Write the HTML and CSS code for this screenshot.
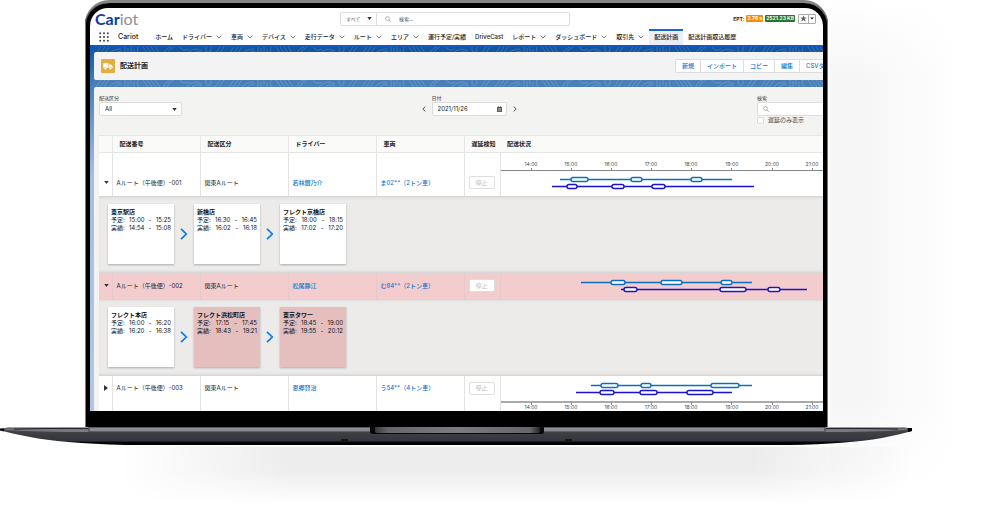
FILE: index.html
```html
<!DOCTYPE html>
<html lang="ja">
<head>
<meta charset="utf-8">
<title>配送計画 | Cariot</title>
<link rel="stylesheet" href="styles.css">
</head>
<body>
<svg class="defs" width="0" height="0" aria-hidden="true">
  <symbol id="down" viewBox="0 0 6 4"><path d="M.6.6 3 3 5.4.6" fill="none" stroke="#555" stroke-width=".8"/></symbol>
  <symbol id="caret" viewBox="0 0 6 4"><path d="M0 0h6L3 4z" fill="#333"/></symbol>
  <symbol id="glass" viewBox="0 0 6 6"><circle cx="2.5" cy="2.5" r="1.9" fill="none" stroke="#888" stroke-width=".6"/><path d="M4 4 5.8 5.8" stroke="#888" stroke-width=".7"/></symbol>
  <symbol id="next" viewBox="0 0 8 12"><path d="M1 .8 6.3 6 1 11.2" fill="none" stroke="#0a7cf0" stroke-width="1.7"/></symbol>
  <pattern id="topo" width="133" height="7" patternUnits="userSpaceOnUse">
    <g fill="none" stroke="#fff" stroke-opacity=".22" stroke-width=".7">
      <path d="M2 7 7 0M6 7 11 0M10 7 15 0M15 7q4-5 12-5M20 7q3-3 8-3M31 0v7M34 1v6M37 0v5M40 2v5M44 0q-2 4 1 7M49 0l5 7M53 0l5 7M57 0l5 7M61 0l5 7M70 7q1-5 7-7M73 7q1-4 7-7M86 0q3 5 9 2M92 7q8-8 16-3M98 7q5-4 10-1M112 0v4q2 3 5 0V0M121 7l5-7M125 7l5-7"/>
    </g>
  </pattern>
</svg>
<main class="stage">
  <div class="lid">
    <div class="screen">
      <header class="topbar">
        <a class="logo" href="#"><b>Car</b>iot</a>
        <form class="global-search">
          <span class="scope">
            <select aria-label="検索対象"><option>すべて</option></select>
            <svg class="caret"><use href="#caret"/></svg>
          </span>
          <svg class="glass"><use href="#glass"/></svg>
          <input type="search" aria-label="検索" placeholder="検索...">
        </form>
        <div class="status">
          <span>EPT:</span><span class="badge orange">2.78 s</span><span class="badge green">2521.23 KB</span>
          <span class="favorites">
            <button type="button" aria-label="お気に入り"><svg width="7" height="7" viewBox="0 0 8 8"><path d="m4 .4 1 2.5 2.700.1-2.100 1.700.8 2.700L4 5.900 1.600 7.400l.8-2.700L.3 3 3 2.900z" fill="#666"/></svg></button>
            <button type="button" aria-label="お気に入り一覧"><svg width="4" height="3" viewBox="0 0 6 4"><use href="#caret"/></svg></button>
          </span>
        </div>
      </header>
      <nav class="nav">
        <button class="launcher" type="button" aria-label="アプリ"><svg width="10" height="10" viewBox="0 0 10 10" fill="#444"><circle cx="1.200" cy="1.200" r="1"/><circle cx="5" cy="1.200" r="1"/><circle cx="8.800" cy="1.200" r="1"/><circle cx="1.200" cy="5" r="1"/><circle cx="5" cy="5" r="1"/><circle cx="8.800" cy="5" r="1"/><circle cx="1.200" cy="8.800" r="1"/><circle cx="5" cy="8.800" r="1"/><circle cx="8.800" cy="8.800" r="1"/></svg></button>
        <span class="app">Cariot</span>
        <a href="#">ホーム</a>
        <a href="#">ドライバー<svg class="down"><use href="#down"/></svg></a>
        <a href="#">車両<svg class="down"><use href="#down"/></svg></a>
        <a href="#">デバイス<svg class="down"><use href="#down"/></svg></a>
        <a href="#">走行データ<svg class="down"><use href="#down"/></svg></a>
        <a href="#">ルート<svg class="down"><use href="#down"/></svg></a>
        <a href="#">エリア<svg class="down"><use href="#down"/></svg></a>
        <a href="#">運行予定/実績</a>
        <a href="#">DriveCast</a>
        <a href="#">レポート<svg class="down"><use href="#down"/></svg></a>
        <a href="#">ダッシュボード<svg class="down"><use href="#down"/></svg></a>
        <a href="#">取引先<svg class="down"><use href="#down"/></svg></a>
        <a class="current" href="#">配送計画</a>
        <a href="#">配送計画取込履歴</a>
      </nav>
      <div class="body">
        <svg class="band dark" aria-hidden="true"><rect width="100%" height="7" fill="url(#topo)"/></svg>
        <section class="title">
          <svg class="truck" viewBox="0 0 14 14"><rect width="14" height="14" rx="1" fill="#e0b040"/><path d="M2.300 4.200h5.200v4.800H2.300zM8.100 5.600h2l1.500 1.700V9H8.100z" fill="#fff"/><circle cx="4.300" cy="9.300" r="1.200" fill="#fff" stroke="#e0b040" stroke-width=".5"/><circle cx="9.500" cy="9.300" r="1.200" fill="#fff" stroke="#e0b040" stroke-width=".5"/></svg>
          <h1>配送計画</h1>
          <div class="actions">
            <button type="button">新規</button><button type="button">インポート</button><button type="button">コピー</button><button type="button">編集</button><button type="button">CSVダウンロード</button>
          </div>
        </section>
        <svg class="band" aria-hidden="true"><rect width="100%" height="7" fill="url(#topo)"/></svg>
        <section class="panel">
          <form class="filters">
            <div class="field kind">
              <label for="kind">配送区分</label>
              <span class="control"><select id="kind"><option>All</option></select><svg class="caret"><use href="#caret"/></svg></span>
            </div>
            <div class="field date">
              <label for="date">日付</label>
              <span class="stepper">
                <button type="button" aria-label="前日"><svg width="4" height="6" viewBox="0 0 4 6"><path d="M3.400.5.800 3l2.600 2.500" fill="none" stroke="#444" stroke-width=".9"/></svg></button>
                <span class="control"><input id="date" type="text" value="2021/11/26"><svg width="5" height="6" viewBox="0 0 5 6"><path d="M0 1h1V0h.7v1h1.600V0H4v1h1v5H0z" fill="#555"/><path d="M.6 2.400h3.800M1 3.600h3M1 4.800h3" stroke="#fff" stroke-width=".4"/></svg></span>
                <button type="button" aria-label="翌日"><svg width="4" height="6" viewBox="0 0 4 6"><path d="M.6.5 3.200 3 .6 5.500" fill="none" stroke="#444" stroke-width=".9"/></svg></button>
              </span>
            </div>
            <div class="field find">
              <label for="find">検索</label>
              <span class="control"><svg class="glass"><use href="#glass"/></svg><input id="find" type="search"></span>
              <label class="check"><input type="checkbox">遅延のみ表示</label>
            </div>
          </form>
          <table class="plans">
            <colgroup><col class="c-toggle"><col class="c-text"><col class="c-text"><col class="c-text"><col class="c-text"><col class="c-stop"><col></colgroup>
            <thead>
              <tr><th></th><th>配送番号</th><th>配送区分</th><th>ドライバー</th><th>車両</th><th>遅延検知</th><th>配送状況</th></tr>
            </thead>
            <tbody>
              <tr class="plan first">
                <td><button class="toggle" type="button" aria-label="閉じる"><svg class="caret"><use href="#caret"/></svg></button></td>
                <td>Aルート（午後便）-001</td><td>関東Aルート</td><td><a href="#">若林銀乃介</a></td><td><a href="#">ま02**（2トン車）</a></td>
                <td><button class="stop" type="button" disabled>停止</button></td>
                <td class="chart"><svg width="322" height="42" viewBox="0 0 322 42">
                  <path class="axis" d="M0 17.500h322M30.500 15v2M70.500 15v2M110.500 15v2M150.500 15v2M190.500 15v2M230.500 15v2M271.500 15v2M311.500 15v2"/>
                  <g class="hours"><text x="30" y="13">14:00</text><text x="70" y="13">15:00</text><text x="110" y="13">16:00</text><text x="150" y="13">17:00</text><text x="190" y="13">18:00</text><text x="231" y="13">19:00</text><text x="271" y="13">20:00</text><text x="311" y="13">21:00</text></g>
                  <g class="due"><path d="M59 26.500h172"/><rect x="70" y="24.500" width="17" height="4" rx="2"/><rect x="130" y="24.500" width="11" height="4" rx="2"/><rect x="190" y="24.500" width="11" height="4" rx="2"/></g>
                  <g class="done"><path d="M51 33.500h202"/><rect x="66" y="31.500" width="10" height="4" rx="2"/><rect x="111" y="31.500" width="12" height="4" rx="2"/><rect x="151" y="31.500" width="13" height="4" rx="2"/></g>
                </svg></td>
              </tr>
              <tr class="detail"><td colspan="7"><div class="stops">
                <article><h2>東京駅店</h2><p><span>予定:</span><span>15:00</span><span>-</span><span>15:25</span></p><p><span>実績:</span><span>14:54</span><span>-</span><span>15:08</span></p></article>
                <svg class="next"><use href="#next"/></svg>
                <article><h2>新橋店</h2><p><span>予定:</span><span>16:30</span><span>-</span><span>16:45</span></p><p><span>実績:</span><span>16:02</span><span>-</span><span>16:18</span></p></article>
                <svg class="next"><use href="#next"/></svg>
                <article><h2>フレクト京橋店</h2><p><span>予定:</span><span>18:00</span><span>-</span><span>18:15</span></p><p><span>実績:</span><span>17:02</span><span>-</span><span>17:20</span></p></article>
              </div></td></tr>
              <tr class="plan late">
                <td><button class="toggle" type="button" aria-label="閉じる"><svg class="caret"><use href="#caret"/></svg></button></td>
                <td>Aルート（午後便）-002</td><td>関東Aルート</td><td><a href="#">松尾静江</a></td><td><a href="#">む84**（2トン車）</a></td>
                <td><button class="stop" type="button" disabled>停止</button></td>
                <td class="chart"><svg width="322" height="26" viewBox="0 0 322 26">
                  <g class="due"><path d="M80 9.500h171"/><rect x="110" y="7.500" width="14" height="4" rx="2"/><rect x="160" y="7.500" width="21" height="4" rx="2"/><rect x="220" y="7.500" width="11" height="4" rx="2"/></g>
                  <g class="done"><path d="M120 16.500h186"/><rect x="123" y="14.500" width="13" height="4" rx="2"/><rect x="219" y="14.500" width="26" height="4" rx="2"/><rect x="267" y="14.500" width="12" height="4" rx="2"/></g>
                </svg></td>
              </tr>
              <tr class="detail"><td colspan="7"><div class="stops">
                <article><h2>フレクト本店</h2><p><span>予定:</span><span>16:00</span><span>-</span><span>16:20</span></p><p><span>実績:</span><span>16:20</span><span>-</span><span>16:38</span></p></article>
                <svg class="next"><use href="#next"/></svg>
                <article class="delayed"><h2>フレクト浜松町店</h2><p><span>予定:</span><span>17:15</span><span>-</span><span>17:45</span></p><p><span>実績:</span><span>18:43</span><span>-</span><span>19:21</span></p></article>
                <svg class="next"><use href="#next"/></svg>
                <article class="delayed"><h2>東京タワー</h2><p><span>予定:</span><span>18:45</span><span>-</span><span>19:00</span></p><p><span>実績:</span><span>19:55</span><span>-</span><span>20:12</span></p></article>
              </div></td></tr>
              <tr class="plan last">
                <td><button class="toggle" type="button" aria-label="開く"><svg width="4" height="6"><path d="M0 0v6l4-3z" fill="#333"/></svg></button></td>
                <td>Aルート（午後便）-003</td><td>関東Aルート</td><td><a href="#">恩郷賢治</a></td><td><a href="#">う54**（4トン車）</a></td>
                <td><button class="stop" type="button" disabled>停止</button></td>
                <td class="chart"><svg width="322" height="34" viewBox="0 0 322 34">
                  <path class="axis thick" d="M0 26h322"/><path class="axis" d="M30.500 26v3M70.500 26v3M110.500 26v3M150.500 26v3M190.500 26v3M230.500 26v3M271.500 26v3M311.500 26v3"/>
                  <g class="hours"><text x="30" y="33">14:00</text><text x="70" y="33">15:00</text><text x="110" y="33">16:00</text><text x="150" y="33">17:00</text><text x="190" y="33">18:00</text><text x="231" y="33">19:00</text><text x="271" y="33">20:00</text><text x="311" y="33">21:00</text></g>
                  <g class="due"><path d="M90 9.500h161"/><rect x="100" y="7.500" width="17" height="4" rx="2"/><rect x="140" y="7.500" width="10" height="4" rx="2"/><rect x="210" y="7.500" width="28" height="4" rx="2"/></g>
                  <g class="done"><path d="M75 16.500h156"/><rect x="99" y="14.500" width="14" height="4" rx="2"/><rect x="139" y="14.500" width="17" height="4" rx="2"/><rect x="186" y="14.500" width="26" height="4" rx="2"/></g>
                </svg></td>
              </tr>
            </tbody>
          </table>
        </section>
      </div>
    </div>
  </div>
  <svg class="base" viewBox="0 0 912 18" preserveAspectRatio="none" aria-hidden="true">
    <defs>
      <linearGradient id="metal" x2="0" y2="1"><stop offset="0" stop-color="#4a4b50"/><stop offset=".4" stop-color="#3c3d43"/><stop offset=".76" stop-color="#34353c"/><stop offset=".85" stop-color="#050506"/><stop offset="1" stop-color="#000"/></linearGradient>
      <linearGradient id="notch"><stop offset="0" stop-color="#39393d"/><stop offset=".08" stop-color="#66666a"/><stop offset=".5" stop-color="#7b7b80"/><stop offset=".94" stop-color="#66666a"/><stop offset="1" stop-color="#242428"/></linearGradient>
    </defs>
    <path d="M0 2 8 .5h896l8 1V4q-10 3-30 7-35 6-92 7H125Q60 16 30 10 8 6 0 3z" fill="url(#metal)"/>
    <path d="M5 1.500 90 1v4Q40 5 5 3zM907 1.500 823 1v4q45 0 84-2z" fill="#77797e"/>
    <path d="M14 2.200q30-1 76-.7M898 2.200q-30-1-72-.7" fill="none" stroke="#232429" stroke-width="1"/>
    <path d="M88 0h738v5H88z" fill="#5b5d62"/>
    <path d="M90 1h734v3H90z" fill="#888b90"/>
    <path d="M370 0h174v5q0 2-4 2H374q-4 0-4-2z" fill="#08080a"/>
    <path d="M375 0h165v4q0 2-3 2H378q-3 0-3-2z" fill="url(#notch)"/>
    <path d="M0 1.500h4v3L0 3.500zM908 1h4v3l-4 1z" fill="#000"/>
    <path d="M341 13h7M565 13h7" stroke="#141418" stroke-width="2"/>
  </svg>
  <div class="floor"></div>
</main>
</body>
</html>
```
FILE: styles.css
```css
* { box-sizing: border-box; }
body { margin: 0; background: #fff; color: #222; font: 6px/8px Inter, "Noto Sans CJK JP", sans-serif; }
a { color: inherit; text-decoration: none; }
button, input, select { margin: 0; padding: 0; border: 0; background: none; color: inherit; font: inherit; }
select, input[type="search"] { appearance: none; }
input, select { outline: 0; min-width: 0; }
svg { display: block; flex: none; }
.defs { position: absolute; }
h1, h2, p { margin: 0; }

.stage {
  min-height: 100vh;
  padding-right: 88px;
  overflow: hidden;
  background:
    linear-gradient(#fff, transparent) right 0 top 0 / 170px 80px no-repeat,
    linear-gradient(transparent, #fff) right 0 top 400px / 170px 90px no-repeat,
    linear-gradient(to right, #f6f6f6 20%, #fff 75%) right 0 top 0 / 170px 490px no-repeat;
}
.lid {
  margin: 0 84px 0 85px;
  padding: 5px 5px 16px;
  border-top: 3px solid #858585;
  border-radius: 24px 24px 0 0;
  background: #000;
  box-shadow: inset 1px 0 #777, inset -1px 0 #777;
}
.screen { overflow: hidden; border-radius: 18px 18px 0 0; background: #fff; }
.caret { width: 5px; height: 3px; }
.glass { width: 6px; height: 6px; }

.topbar { display: grid; grid-template-columns: 250px 230px 1fr; align-items: center; height: 21px; }
.logo { padding-left: 5px; color: #8c9095; font: 16px/20px Lato, sans-serif; }
.logo b { color: #0b3aa5; font-weight: 700; }
.global-search { display: flex; align-items: center; height: 14px; border: 1px solid #ddd; border-radius: 2px; font-size: 5px; }
.scope { display: flex; align-items: center; width: 36px; height: 100%; margin-right: 8px; padding: 0 4px 0 5px; border-right: 1px solid #ddd; }
.scope select { flex: 1; color: #555; }
.global-search input { flex: 1; margin-left: 8px; }
.global-search input::placeholder { color: #555; }
.status { display: flex; justify-content: flex-end; align-items: center; gap: 2px; padding-right: 7px; font-size: 5px; font-weight: 700; }
.badge { padding: 0 1px; border-radius: 1px; color: #fff; line-height: 7px; }
.orange { background: #f78b0c; }
.green { background: #24772b; }
.favorites { display: flex; margin-left: 1px; border: 1px solid #aaa; border-radius: 1px; }
.favorites button { display: grid; place-items: center; height: 8px; padding: 0 1px; }
.favorites button + button { border-left: 1px solid #aaa; }

.nav { display: flex; align-items: stretch; gap: 9px; height: 16px; padding-left: 9px; white-space: nowrap; }
.nav a { display: flex; align-items: center; gap: 4px; font-weight: 500; }
.down { width: 6px; height: 4px; }
.launcher { display: grid; place-items: center; }
.app { align-self: center; margin-right: 8px; font-size: 7px; font-weight: 500; }
.nav .current { margin: 0 -4px; padding: 0 5px; background: #e9eef9; box-shadow: inset 0 2px #1b65c9; }

.body { padding-left: 4px; background: linear-gradient(#0b55ad, #4a80b9 42px, #a9bddd 130px, #b3c5e3); }
.band { width: 100%; height: 7px; background: #4a80b8; }
.band.dark { background: #14569f; border-top: 2px solid #1259c3; }
.title { display: flex; align-items: center; height: 28px; padding-left: 7px; border-radius: 2px 0 0 2px; background: #f3f3f3; }
.truck { width: 14px; height: 14px; }
.title h1 { margin-left: 5px; font-size: 7px; line-height: 10px; }
.actions { display: flex; width: 148px; height: 14px; margin-left: auto; overflow: hidden; border: 1px solid #ddd; border-right: 0; border-radius: 2px 0 0 2px; background: #fff; }
.actions button { flex: none; padding: 0 6px; color: #0f76d2; font-weight: 500; }
.actions button + button { border-left: 1px solid #ddd; }

.panel { padding-left: 5px; border-radius: 2px 0 0; background: #f3f3f2; }
.filters { display: grid; grid-template-columns: 1fr auto 1fr; align-items: start; height: 48px; padding-top: 7px; }
.field { color: #444; }
.field > label { display: block; font-size: 5px; }
.control { display: flex; align-items: center; height: 14px; border: 1px solid #ddd; border-radius: 2px; background: #fff; color: #222; }
.kind .control { width: 83px; padding: 0 4px 0 5px; }
.kind select { flex: 1; }
.date { padding-left: 16px; }
.date > label { padding-left: 10px; }
.stepper { display: flex; align-items: center; gap: 6px; }
.date .control { width: 75px; padding: 0 4px 0 5px; }
.date input { flex: 1; }
.find { width: 66px; justify-self: end; }
.find .control { padding-left: 5px; border-right: 0; border-radius: 2px 0 0 2px; }
.field > .check { display: flex; align-items: center; gap: 4px; font-size: 6px; }
.check input { appearance: none; width: 7px; height: 7px; border: 1px solid #ddd; border-radius: 1px; background: #fff; }

.plans { width: 100%; table-layout: fixed; border-collapse: collapse; background: #fff; white-space: nowrap; }
.c-toggle { width: 13px; }
.c-text { width: 88px; }
.c-stop { width: 36px; }
.plans th { height: 17px; padding: 0 7px; border: solid #e6e6e4; border-width: 1px 0 1px 1px; background: #fafaf9; font-weight: 600; text-align: left; }
.plans th:first-child { border-left: 0; }
.plans th:last-child { border-left: 0; }
.plans td { padding: 0 4px; border-left: 1px solid #e3e3e3; }
.plans td:first-child { border-left: 0; }
.plans a { color: #0f76d2; font-weight: 500; }
.plans .chart { padding: 0; }
.toggle { display: grid; place-items: center; width: 6px; height: 8px; }
.plan.first td { height: 43px; padding-top: 17px; }
.plan.first .chart { padding-top: 0; }
.plan.late td { height: 26px; }
.plan.late { background: #f3cdcd; }
.plan.late td { border-color: #e5caca; }
.plan.last td { height: 35px; padding-bottom: 10px; }
.plan.last .chart { padding-bottom: 0; }
.stop { display: block; width: 26px; height: 13px; border: 1px solid #ddd; border-radius: 2px; background: #fff; color: #c5c5c5; }
.axis { stroke: #888; stroke-width: 1; }
.axis.thick { stroke: #aaa; stroke-width: 2; }
.hours { fill: #444; font-size: 5px; text-anchor: middle; }
.due, .done { fill: #fff; stroke-width: 1.4; }
.due { stroke: #0b6fc0; }
.done { stroke: #1a12cc; }

.plans .detail td { height: 77px; padding: 0 9px; background: #ecebea; box-shadow: inset 0 3px 3px -2px #ccc, inset 0 -3px 3px -2px #ccc; }
.stops { display: flex; align-items: center; gap: 6px; }
.stops article { width: 66px; height: 60px; padding: 4px 3px; background: #fff; box-shadow: 0 1px 2px #aaa; color: #111; }
.stops .delayed { background: #e5bebe; }
.stops h2 { font-size: 6px; line-height: 8px; }
.stops p { display: flex; justify-content: space-between; }
.next { width: 8px; height: 12px; }

.base { width: 100%; height: 18px; }
.floor {
  height: 60px;
  margin: 2px 0 0 120px;
  background: linear-gradient(#ececec, #ededed 40%, #fff 95%);
  mask-image: linear-gradient(to right, transparent, #000 22%, #000 80%, transparent);
}
```
